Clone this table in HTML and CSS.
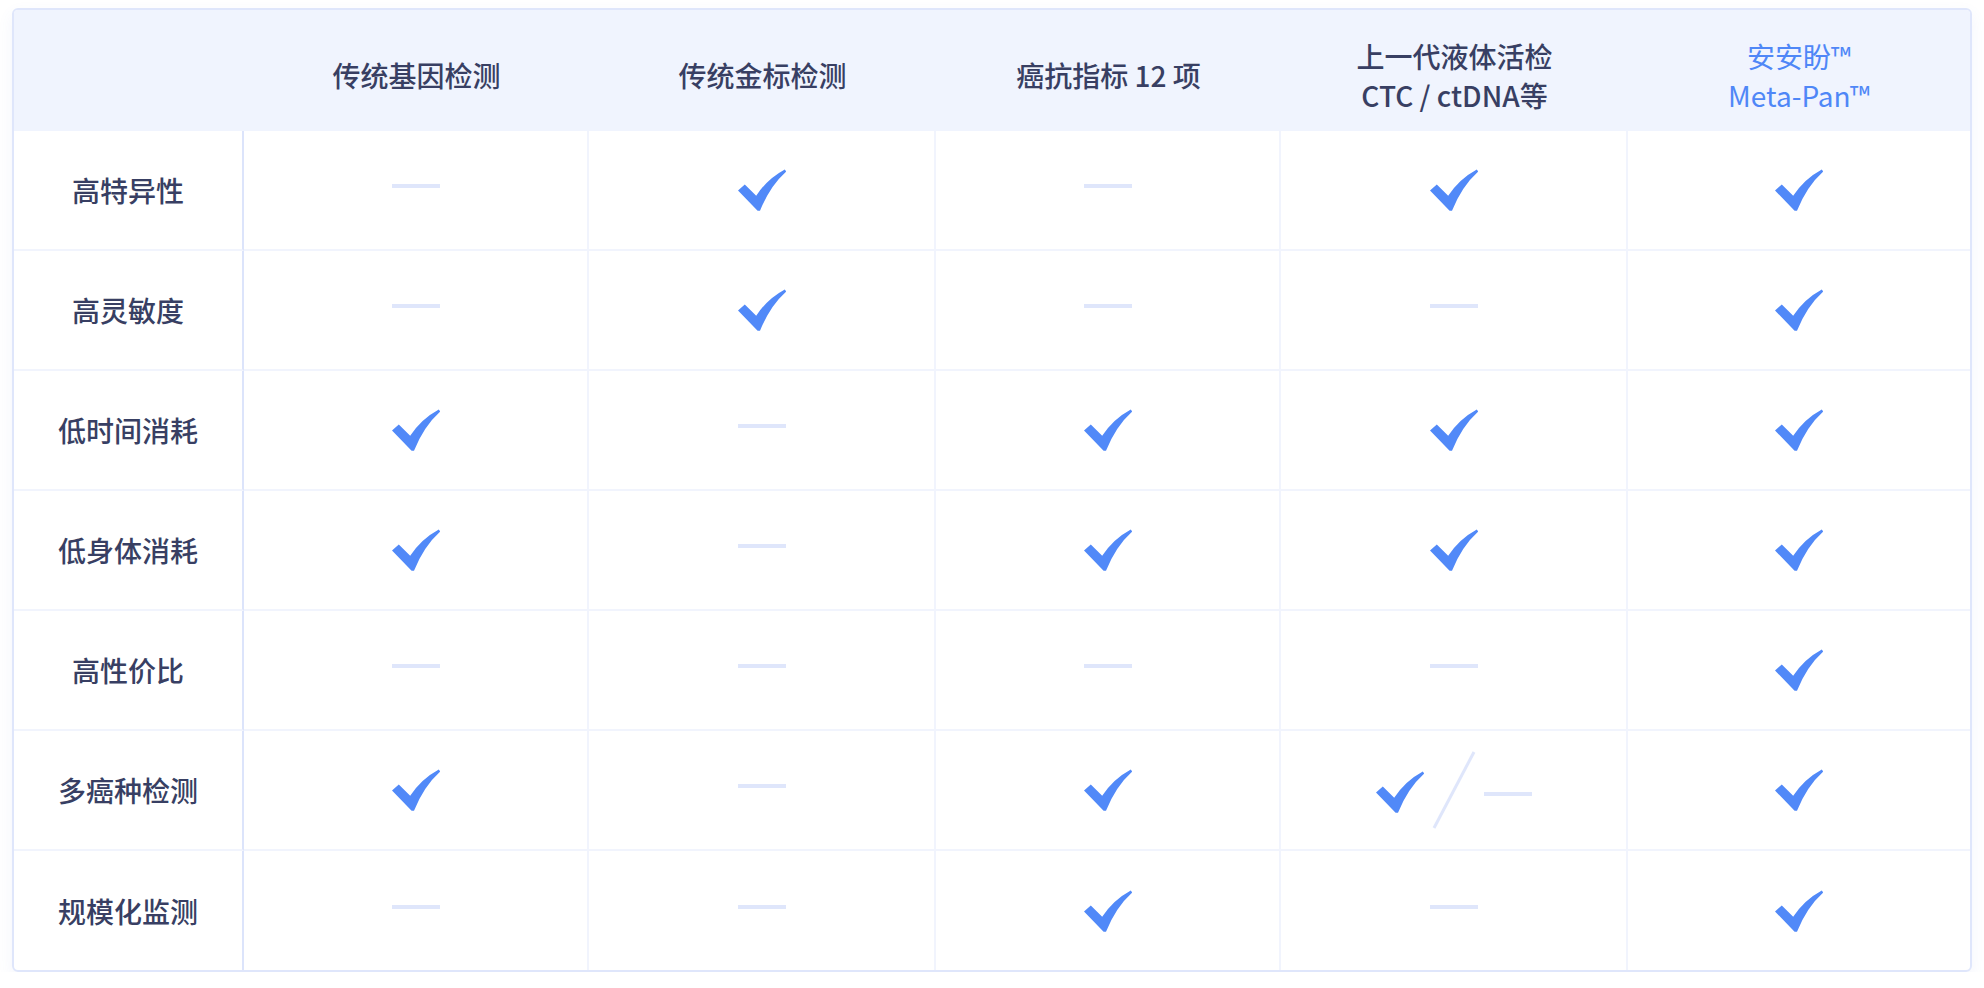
FILE: index.html
```html
<!DOCTYPE html>
<html lang="zh-CN">
<head>
<meta charset="utf-8">
<title>对比</title>
<link rel="stylesheet" href="styles.css">
</head>
<body>
<svg class="defs" width="0" height="0" aria-hidden="true">
  <defs>
    <symbol id="chk" viewBox="0 0 48 42">
      <path d="M0 21.5 L6.8 15.4 L18.2 26.8 Q29 10 46.8 0.4 L48.2 2.6 Q32 17 22 41.8 L19.6 41.8 Z" fill="#5189f8"/>
    </symbol>
  </defs>
</svg>
<div class="page">
  <div class="table">
    <div class="hcell"></div>
    <div class="hcell">传统基因检测</div>
    <div class="hcell">传统金标检测</div>
    <div class="hcell">癌抗指标 12 项</div>
    <div class="hcell">上一代液体活检<br>CTC / ctDNA等</div>
    <div class="hcell brand">安安盼™<br>Meta-Pan™</div>

    <div class="label">高特异性</div>
    <div class="cell"><span class="dash"></span></div>
    <div class="cell"><svg class="chk"><use href="#chk"/></svg></div>
    <div class="cell"><span class="dash"></span></div>
    <div class="cell"><svg class="chk"><use href="#chk"/></svg></div>
    <div class="cell last"><svg class="chk"><use href="#chk"/></svg></div>

    <div class="label">高灵敏度</div>
    <div class="cell"><span class="dash"></span></div>
    <div class="cell"><svg class="chk"><use href="#chk"/></svg></div>
    <div class="cell"><span class="dash"></span></div>
    <div class="cell"><span class="dash"></span></div>
    <div class="cell last"><svg class="chk"><use href="#chk"/></svg></div>

    <div class="label">低时间消耗</div>
    <div class="cell"><svg class="chk"><use href="#chk"/></svg></div>
    <div class="cell"><span class="dash"></span></div>
    <div class="cell"><svg class="chk"><use href="#chk"/></svg></div>
    <div class="cell"><svg class="chk"><use href="#chk"/></svg></div>
    <div class="cell last"><svg class="chk"><use href="#chk"/></svg></div>

    <div class="label">低身体消耗</div>
    <div class="cell"><svg class="chk"><use href="#chk"/></svg></div>
    <div class="cell"><span class="dash"></span></div>
    <div class="cell"><svg class="chk"><use href="#chk"/></svg></div>
    <div class="cell"><svg class="chk"><use href="#chk"/></svg></div>
    <div class="cell last"><svg class="chk"><use href="#chk"/></svg></div>

    <div class="label">高性价比</div>
    <div class="cell"><span class="dash"></span></div>
    <div class="cell"><span class="dash"></span></div>
    <div class="cell"><span class="dash"></span></div>
    <div class="cell"><span class="dash"></span></div>
    <div class="cell last"><svg class="chk"><use href="#chk"/></svg></div>

    <div class="label">多癌种检测</div>
    <div class="cell"><svg class="chk"><use href="#chk"/></svg></div>
    <div class="cell"><span class="dash"></span></div>
    <div class="cell"><svg class="chk"><use href="#chk"/></svg></div>
    <div class="cell combo">
      <svg class="chk"><use href="#chk"/></svg>
      <svg class="slash" viewBox="0 0 44 78"><line x1="42" y1="1" x2="2" y2="77" stroke="#dfe6fb" stroke-width="3"/></svg>
      <span class="dash flat"></span>
    </div>
    <div class="cell last"><svg class="chk"><use href="#chk"/></svg></div>

    <div class="label bottom">规模化监测</div>
    <div class="cell bottom"><span class="dash"></span></div>
    <div class="cell bottom"><span class="dash"></span></div>
    <div class="cell bottom"><svg class="chk"><use href="#chk"/></svg></div>
    <div class="cell bottom"><span class="dash"></span></div>
    <div class="cell last bottom"><svg class="chk"><use href="#chk"/></svg></div>
  </div>
</div>
</body>
</html>
```
FILE: styles.css
```css
html, body {
  margin: 0;
  padding: 0;
  background: #ffffff;
}

.defs {
  position: absolute;
  width: 0;
  height: 0;
}

.page {
  padding: 8px 12px 0 12px;
}

.table {
  width: 1960px;
  box-sizing: border-box;
  border: 2px solid #dfe6fb;
  border-radius: 6px;
  overflow: hidden;
  display: grid;
  grid-template-columns: 230px 345px 347px 345px 347px 1fr;
  grid-template-rows: 121px repeat(6, 120px) 119px;
  box-shadow: 0 6px 16px rgba(90, 120, 210, 0.07);
  font-family: "Noto Sans CJK SC", "Noto Sans", sans-serif;
  color: #383f63;
}

.hcell {
  background: #f0f4fe;
  display: flex;
  align-items: center;
  justify-content: center;
  text-align: center;
  font-size: 28px;
  font-weight: 500;
  line-height: 39px;
  padding-top: 10px;
  box-sizing: border-box;
}

.hcell.brand {
  color: #4f87f7;
  font-weight: 400;
}

.label {
  display: flex;
  align-items: center;
  justify-content: center;
  font-size: 28px;
  font-weight: 500;
  border-right: 2px solid #dce4fb;
  border-bottom: 2px solid #f1f4fd;
  box-sizing: border-box;
}

.cell {
  display: flex;
  align-items: center;
  justify-content: center;
  border-right: 2px solid #f1f4fd;
  border-bottom: 2px solid #f1f4fd;
  box-sizing: border-box;
}

.cell.last {
  border-right: none;
}

.bottom {
  border-bottom: none;
}

.chk {
  width: 48px;
  height: 42px;
  display: block;
}

.dash {
  display: block;
  width: 48px;
  height: 4px;
  background: #dfe6fb;
  transform: translateY(-4px);
}

.dash.flat {
  transform: translateY(4px);
}

.combo .chk {
  margin-top: 4px;
}

.slash {
  width: 44px;
  height: 78px;
  display: block;
  margin: 0 8px 0 8px;
}
```
